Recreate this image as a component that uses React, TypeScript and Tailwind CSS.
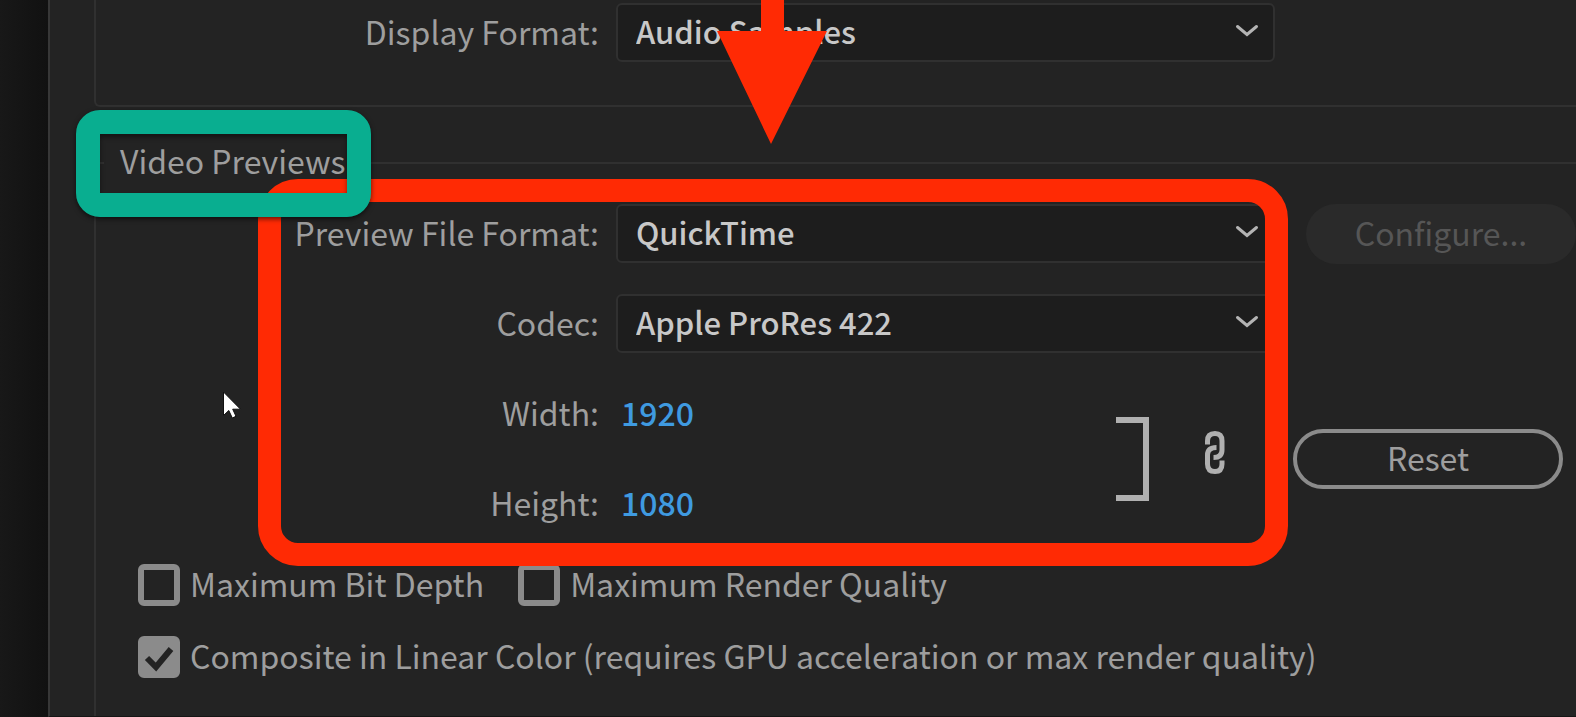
import { useState } from 'react';
import type { ReactNode } from 'react';

interface SelectFieldProps {
  id: string;
  label: string;
  options: string[];
  children?: ReactNode;
}

function Label({ htmlFor, children }: { htmlFor: string; children: ReactNode }) {
  return (
    <label htmlFor={htmlFor} className="w-[503px] shrink-0 whitespace-nowrap pb-1 text-right text-[#9e9e9e]">
      {children}
    </label>
  );
}

function SelectField({ id, label, options, children }: SelectFieldProps) {
  return (
    <div className="flex h-[59px] items-center">
      <Label htmlFor={id}>{label}</Label>
      <div className="relative ml-[17px] mr-[31px] min-w-0 flex-1">
        <select
          id={id}
          className="block h-[59px] w-full appearance-none rounded-md border-2 border-[#303030] bg-[#1d1d1d] pb-1 pl-[18px] pr-14 text-[31px] font-medium text-[#c8c8c8] outline-none"
        >
          {options.map((option) => (
            <option key={option}>{option}</option>
          ))}
        </select>
        <svg
          className="pointer-events-none absolute right-4 top-[21px] h-[14px] w-6"
          viewBox="0 0 24 14"
          fill="none"
          aria-hidden="true"
        >
          <path d="M2.500 2.500 L12 10.500 L21.500 2.500" stroke="#b4b4b4" strokeWidth="3" strokeLinecap="round" />
        </svg>
      </div>
      <div className="w-[270px] shrink-0">{children}</div>
    </div>
  );
}

function NumberField({ id, label, initial }: { id: string; label: string; initial: string }) {
  const [value, setValue] = useState(initial);

  return (
    <div className="flex h-[59px] items-center">
      <Label htmlFor={id}>{label}</Label>
      <input
        id={id}
        type="text"
        inputMode="numeric"
        value={value}
        onChange={(e) => setValue(e.target.value)}
        className="ml-[22px] w-32 bg-transparent pb-1 font-medium text-[#3f9ae0] outline-none"
      />
    </div>
  );
}

function CheckField({ id, label, initial = false }: { id: string; label: string; initial?: boolean }) {
  const [checked, setChecked] = useState(initial);

  return (
    <div className="flex items-center gap-[10px]">
      <span className="relative block size-[42px] shrink-0">
        <input
          id={id}
          type="checkbox"
          checked={checked}
          onChange={(e) => setChecked(e.target.checked)}
          className="block size-[42px] appearance-none rounded-md border-6 border-[#8b8b8b] checked:bg-[#8b8b8b]"
        />
        {checked && (
          <svg
            className="pointer-events-none absolute inset-0 size-[42px]"
            viewBox="0 0 42 42"
            fill="none"
            aria-hidden="true"
          >
            <path d="M9 22 L18 31 L33 13" stroke="#232323" strokeWidth="6" />
          </svg>
        )}
      </span>
      <label htmlFor={id} className="whitespace-nowrap pb-1 text-[#9e9e9e]">
        {label}
      </label>
    </div>
  );
}

// Red arrow, red frame, green frame and the mouse pointer drawn over the dialog
function Annotations() {
  return (
    <div className="pointer-events-none absolute inset-0" aria-hidden="true">
      <svg className="absolute left-[714px] top-0 h-[144px] w-[115px]" viewBox="0 0 115 144">
        <path d="M47 0 H70 V31 H113 L57 144 L3 31 H47 Z" fill="#ff2a04" />
      </svg>
      <div className="absolute left-[258px] top-[179px] h-[387px] w-[1030px] rounded-[40px] border-[23px] border-[#ff2a04]" />
      <div className="absolute left-[76px] top-[110px] h-[107px] w-[295px] rounded-3xl border-24 border-[#09ae90] shadow-[0_2px_5px_rgba(0,0,0,0.6)]" />
      {/* inner shade under the green frame */}
      <div className="absolute left-[100px] top-[134px] h-[59px] w-[247px] shadow-[inset_0_3px_5px_rgba(0,0,0,0.45)]" />
      <svg className="absolute left-[222px] top-[390px] h-[30px] w-5" viewBox="0 0 20 30">
        <path
          d="M1.500 2 V25.500 L6.800 20.500 L10.300 28 L14 26.300 L10.700 19.200 H18.500 Z"
          fill="#ffffff"
          stroke="#111111"
          strokeWidth="1"
        />
      </svg>
    </div>
  );
}

export default function App() {
  return (
    <div className="relative flex min-h-screen overflow-hidden bg-[#232323] font-['Noto_Sans_CJK_SC','Noto_Sans',sans-serif] text-[32px] leading-[48px]">
      <div className="w-12 shrink-0 bg-linear-to-r from-[#181818] to-[#111111]" />

      <main className="min-w-0 flex-1 border-b border-l-2 border-b-[#151515] border-l-[#373737] pl-11">
        <fieldset className="min-w-0 rounded-bl-md border-b-2 border-l-2 border-[#303030] pb-[43px] pt-[3px]">
          <SelectField id="display-format" label="Display Format:" options={['Audio Samples', 'Milliseconds']} />
        </fieldset>

        <fieldset className="mt-8 min-w-0 rounded-tl-md border-l-2 border-t-2 border-[#303030] pb-[38px] pt-[17px]">
          <legend className="ml-2 px-4 pb-1.5 leading-[42px] text-[#9e9e9e]">Video Previews</legend>

          <div className="flex flex-col gap-[31px]">
            <SelectField id="file-format" label="Preview File Format:" options={['QuickTime', 'I-Frame Only MPEG']}>
              <button type="button" disabled className="block h-[60px] w-full rounded-full bg-[#2a2a2a] pb-1 text-[#565656]">
                Configure...
              </button>
            </SelectField>
            <SelectField id="codec" label="Codec:" options={['Apple ProRes 422', 'Apple ProRes 422 HQ']} />

            <div className="flex items-center pr-[13px]">
              <div className="flex flex-1 flex-col gap-[31px]">
                <NumberField id="width" label="Width:" initial="1920" />
                <NumberField id="height" label="Height:" initial="1080" />
              </div>
              <div className="h-[84px] w-[33px] border-6 border-l-0 border-[#b0b0b0]" />
              <button type="button" aria-label="Constrain proportions" className="ml-14 mr-[68px] block pb-3">
                <svg className="h-[43px] w-5" viewBox="0 0 20 43" fill="none" stroke="#b0b0b0" strokeWidth="5">
                  <path d="M2.500 13.500 V10 C2.500 5 5 2.500 10 2.500 C14.500 2.500 17 5 17 10 V19 C17 24 14 26.500 8.500 26.500" />
                  <path d="M11.500 16.500 C5.500 16.500 2.500 19 2.500 24 V33 C2.500 38 5 40.500 10 40.500 C14.500 40.500 17 38 17 33 V29.500" />
                </svg>
              </button>
              <button type="button" className="h-[60px] w-[270px] rounded-full border-4 border-[#8b8b8b] pb-1 text-[#9e9e9e]">
                Reset
              </button>
            </div>
          </div>

          <div className="mt-[31px] flex flex-col gap-[30px] pl-[42px]">
            <div className="flex h-[42px] items-center gap-[34px]">
              <CheckField id="bit-depth" label="Maximum Bit Depth" />
              <CheckField id="render-quality" label="Maximum Render Quality" />
            </div>
            <div className="flex h-[42px] items-center">
              <CheckField
                id="linear-color"
                label="Composite in Linear Color (requires GPU acceleration or max render quality)"
                initial
              />
            </div>
          </div>
        </fieldset>
      </main>

      <Annotations />
    </div>
  );
}
